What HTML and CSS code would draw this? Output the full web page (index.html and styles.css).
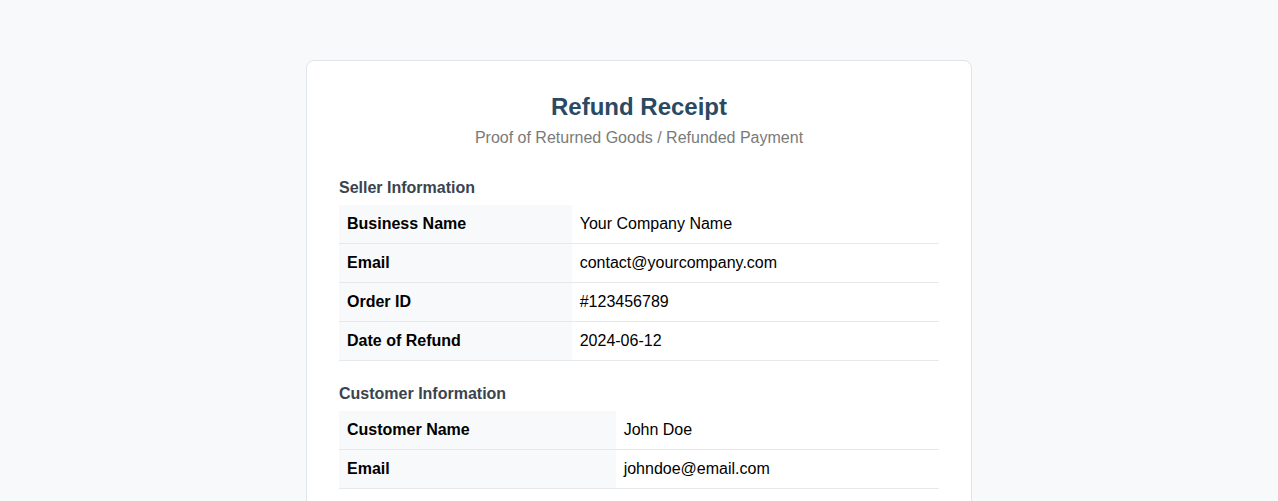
FILE: index.html
```html
<!DOCTYPE html>
<html lang="en">
<head>
<meta charset="utf-8">
<title>Refund Receipt</title>
<link rel="stylesheet" href="styles.css">
</head>
<body>
<div class="receipt">
  <header class="receipt-header">
    <h1 class="title">Refund Receipt</h1>
    <p class="subtitle">Proof of Returned Goods / Refunded Payment</p>
  </header>
  <section class="section">
    <h2 class="section-title">Seller Information</h2>
    <table class="info-table">
      <tr><th>Business Name</th><td>Your Company Name</td></tr>
      <tr><th>Email</th><td>contact@yourcompany.com</td></tr>
      <tr><th>Order ID</th><td>#123456789</td></tr>
      <tr><th>Date of Refund</th><td>2024-06-12</td></tr>
    </table>
  </section>
  <section class="section">
    <h2 class="section-title">Customer Information</h2>
    <table class="info-table">
      <tr><th>Customer Name</th><td>John Doe</td></tr>
      <tr><th>Email</th><td>johndoe@email.com</td></tr>
    </table>
  </section>
</div>
</body>
</html>
```
FILE: styles.css
```css
html, body {
  margin: 0;
  padding: 0;
}
body {
  background: #f8f9fb;
  font-family: "Liberation Sans", Arial, sans-serif;
  color: #000;
  padding: 60px 0 40px;
}
.receipt {
  width: 600px;
  margin: 0 auto;
  background: #fff;
  border: 1px solid #e1e4e8;
  border-radius: 8px;
  padding: 32px;
}
.receipt-header {
  text-align: center;
  margin-bottom: 32px;
}
.title {
  margin: 0;
  font-size: 24px;
  font-weight: bold;
  color: #2a4a63;
}
.subtitle {
  margin: 8px 0 0;
  font-size: 16px;
  color: #7a7a7a;
}
.section {
  margin-bottom: 24px;
}
.section:last-child {
  margin-bottom: 0;
}
.section-title {
  margin: 0 0 8px;
  font-size: 16px;
  font-weight: bold;
  color: #3a4450;
}
.info-table {
  width: 100%;
  border-collapse: collapse;
  font-size: 16px;
}
.info-table th,
.info-table td {
  padding: 10px 8px;
  line-height: 18px;
  text-align: left;
  border-bottom: 1px solid #e6e8ea;
}
.info-table th {
  background: #f8f9fa;
  font-weight: bold;
}
```
